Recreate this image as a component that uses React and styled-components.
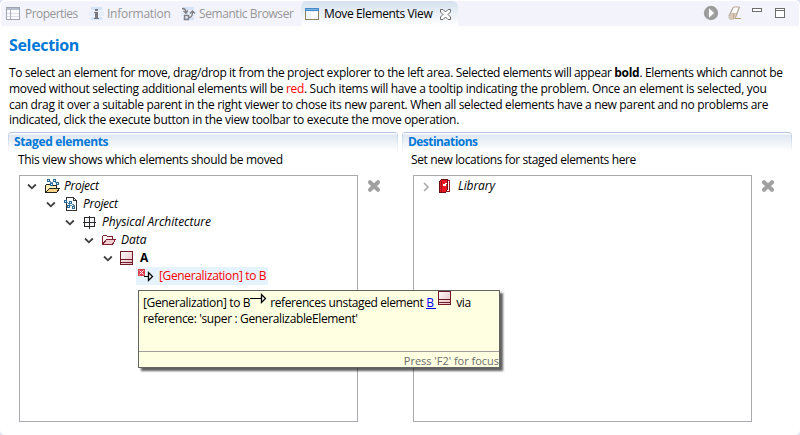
import React from 'react';
import styled, { createGlobalStyle } from 'styled-components';

const GlobalStyle = createGlobalStyle`
  * { box-sizing: border-box; }
  body {
    margin: 0;
    background: #dde5f5;
    overflow: hidden;
    font: 12px/16px "Open Sans", "Noto Sans", sans-serif;
    letter-spacing: -0.36px;
    color: #000;
    white-space: pre;
  }
`;

const View = styled.main`
  display: flex;
  flex-direction: column;
  width: 800px;
  height: 435px;
  padding: 1px 1px 0;
  background: #fff;
  border-radius: 5px;
`;

const Text = styled.span`
  letter-spacing: ${(p) => p.$ls ?? -0.36}px;
  font-weight: ${(p) => (p.$bold ? 700 : 400)};
  font-style: ${(p) => (p.$italic ? 'italic' : 'normal')};
  color: ${(p) => p.$color ?? 'inherit'};
`;

const TabBar = styled.header`
  display: flex;
  height: 25px;
  background: #f3f4fb;
  border-radius: 5px 5px 0 0;
`;

const Tab = styled.div`
  display: flex;
  align-items: center;
  width: ${(p) => p.$width}px;
  padding: 1px 0 0 ${(p) => p.$pad}px;
  gap: ${(p) => p.$gap ?? 4}px;
  color: ${(p) => (p.$active ? '#000' : '#969696')};
  background: ${(p) => (p.$active ? 'linear-gradient(#d5e1ed, #fff)' : 'none')};
  border-radius: ${(p) => (p.$active ? '6px 6px 0 0' : '0')};
  svg { flex: none; }
`;

const TabTitle = styled.span`
  margin-right: 4px;
`;

const TabTools = styled.div`
  display: flex;
  align-items: flex-start;
  margin-left: auto;
  width: 96px;
`;

const Tool = styled.div`
  display: flex;
  width: ${(p) => p.$width}px;
  padding-top: ${(p) => p.$top}px;
`;

const Heading = styled.h1`
  margin: 8px 0 0 8px;
  height: 23px;
  font-size: 16px;
  line-height: 22px;
  letter-spacing: -0.34px;
  color: #0078d7;
`;

const Intro = styled.div`
  display: flex;
  flex-direction: column;
  margin: 8px 0 0 8px;
  height: 67px;
  line-height: 15.8px;
`;

const Columns = styled.div`
  display: grid;
  grid-template-columns: 390px 390px;
  column-gap: 4px;
  margin-left: 7px;
`;

const Section = styled.section`
  display: flex;
  flex-direction: column;
`;

const SectionTitle = styled.h2`
  margin: 0;
  height: 20px;
  padding-left: 5px;
  font-size: 12px;
  line-height: 18px;
  letter-spacing: ${(p) => p.$ls}px;
  color: #0078d7;
  border: 1px solid transparent;
  border-top-color: #b4c7dd;
  border-radius: 4px 4px 0 0;
  background:
    linear-gradient(#b4c7dd, #fff) left / 1px 100% no-repeat border-box,
    linear-gradient(#b4c7dd, #fff) right / 1px 100% no-repeat border-box,
    linear-gradient(#fff 1px, #dfe7f1 2px, #fff) padding-box;
`;

const Caption = styled.p`
  margin: 0 0 7px;
  padding-left: ${(p) => p.$pad}px;
`;

const TreeRow = styled.div`
  display: flex;
  gap: 9px;
  margin-left: 11px;
`;

const RemoveButton = styled.span`
  display: flex;
  padding-top: 4px;
`;

const Tree = styled.div`
  width: 339px;
  height: 247px;
  padding-top: 1px;
  border: 1px solid #a9aaae;
`;

const Node = styled.div`
  display: flex;
  align-items: center;
  height: 18px;
  padding-left: ${(p) => p.$indent}px;
`;

const Twisty = styled.span`
  display: flex;
  width: 17px;
  padding-top: 1px;
`;

const NodeIcon = styled.span`
  display: flex;
  width: ${(p) => p.$width ?? 20}px;
`;

const Highlight = styled.div`
  display: flex;
  align-items: center;
  height: 18px;
  width: 132px;
  padding-left: 1px;
  background: #e5f3ff;
`;

const Tooltip = styled.aside`
  position: absolute;
  left: 138px;
  top: 290px;
  display: flex;
  flex-direction: column;
  width: 362px;
  height: 78px;
  background: #ffffe1;
  border: 1px solid #646464;
  box-shadow: 3px 3px 2px rgba(0, 0, 0, 0.62);
`;

const TipBody = styled.div`
  flex: 1;
  padding: 4px 0 0 4px;
`;

const TipLine = styled.div`
  display: flex;
  height: 16px;
`;

const TipIcon = styled.span`
  display: flex;
  flex: none;
  width: ${(p) => p.$width}px;
  margin-top: ${(p) => p.$lift}px;
`;

const TipLink = styled.a`
  width: 10px;
  height: 14px;
  margin-right: 2px;
  color: #0000ff;
  text-decoration: none;
  border-bottom: 1px solid #0000ff;
`;

const TipFooter = styled.div`
  height: 16px;
  border-top: 1px solid #a0a0a0;
  text-align: right;
  font-size: 11px;
  line-height: 18px;
  letter-spacing: -0.02px;
  color: #6d6d6d;
`;

const Icon = ({ w = 16, h = 16, smooth, children }) => (
  <svg width={w} height={h} viewBox={`0 0 ${w} ${h}`} fill="none" shapeRendering={smooth ? 'auto' : 'crispEdges'}>
    {children}
  </svg>
);

const PropertiesIcon = () => (
  <Icon>
    <path d="M1.500 1.500h13v12h-13z" fill="#fbfbfe" stroke="#9da5b1" />
    <path d="M2 2h12v2H2z" fill="#b4bdcb" />
    <path d="M2 7.500h12M2 10.500h12" stroke="#dcdfe7" />
    <path d="M5.500 4v9" stroke="#a9afbb" />
  </Icon>
);

const Glow = () => (
  <>
    <path d="M3 1h11v3H3zM3 11h11v3H3z" fill="#d5e3f7" />
    <path d="M1 5h15v5H1z" fill="#e6eefb" />
  </>
);

const InfoIcon = () => (
  <Icon>
    <Glow />
    <path d="M7 3h3v2H7zM6 6h4v6h1v1H6v-1h1V7H6z" fill="#77777d" />
  </Icon>
);

const SemanticIcon = () => (
  <Icon smooth>
    <Glow />
    <path d="M2 2.500c3 0 4 1 4 4M3.500 5L6 7.200 8 4.500M4.500 9.500h4v4h-4zM9 11.500c3 0 3.500-2 3.500-5.500M10 7.500L12.500 5 15 7.500" stroke="#7e7e84" strokeWidth="1.300" />
  </Icon>
);

const WindowIcon = () => (
  <Icon>
    <path d="M1 4h14v10H1z" fill="#edf5fc" />
    <path d="M7 6h7v4l-7 4z" fill="#fff" />
    <path d="M1 2h14v3H1z" fill="#4789c4" />
    <path d="M2 3h12v1H2z" fill="#79b2e0" />
    <path d="M1.500 5v8.500h13V5" stroke="#91805e" />
  </Icon>
);

const CloseIcon = () => (
  <Icon w={11} h={11} smooth>
    <path d="M.5.5H3L5.500 3 8 .5h2.500V3L8 5.500 10.500 8v2.500H8L5.500 8 3 10.500H.5V8L3 5.500.5 3z" fill="#fff" stroke="#6a6a6a" />
  </Icon>
);

const PlayIcon = () => (
  <Icon smooth>
    <circle cx="8" cy="8" r="7.200" fill="#a2a2a2" />
    <circle cx="8" cy="8" r="5.500" stroke="#949494" />
    <path d="M6 3.200v9.600L11 8z" fill="#fff" />
  </Icon>
);

const EraserIcon = () => (
  <Icon smooth>
    <path d="M6.500 2h6L8.500 12.500l-2 1.500H2.500L2 11z" fill="#fff" stroke="#baa998" />
    <path d="M4 7.500l4.500.5 2-1-3 6-1.500 1H2.500L2 11z" fill="#d8cabb" />
    <path d="M7 8l-1 6" stroke="#b9a48d" />
    <path d="M6 2.500L2 11M12 2.500L8.500 12.500" stroke="#a99c91" strokeWidth=".8" />
    <path d="M8 13.500h6" stroke="#b1a070" />
  </Icon>
);

const MinimizeIcon = () => (
  <Icon w={11} h={11}><path d="M.5.5h9v3h-9z" fill="#fff" stroke="#6d6d6d" /></Icon>
);

const MaximizeIcon = () => (
  <Icon w={11} h={11}><path d="M.5.5h9v9h-9zM1 2.500h8" fill="#fff" stroke="#6d6d6d" /></Icon>
);

const Chevron = ({ closed }) => (
  <Icon w={10} h={10} smooth>
    <path d={closed ? 'M3 1l4 4-4 4' : 'M1 2.500l3.900 3.800L8.800 2.500'} stroke={closed ? '#a6a6a6' : '#404040'} strokeWidth={closed ? 1.500 : 1.800} />
  </Icon>
);

const ProjectFolderIcon = () => (
  <Icon w={17}>
    <path d="M1.500 14.500v-7l1-1h4l1 1h5v2" fill="#fff0b7" stroke="#222" />
    <path d="M1.500 14.500l4-4h10l-3 4z" fill="#f7d287" stroke="#222" />
    <path d="M5 2.500l3 3 2-3 2 2" stroke="#5c91b5" />
    <g fill="#d3e9f6" stroke="#2d6d9d">
      <path d="M3.500 1.500h2v2h-2zM6.500 5.500h2v2h-2zM9.500 1.500h2v2h-2zM12.500 4.500h2v2h-2z" />
    </g>
  </Icon>
);

const ProjectFileIcon = () => (
  <Icon>
    <path d="M3.500 1.500h7l3 3v10h-10z" fill="#fff" stroke="#333" />
    <path d="M10.500 1.500v3h3" stroke="#333" />
    <path d="M4 6l4 4 2-2 2 3" stroke="#5c91b5" />
    <g fill="#d3e9f6" stroke="#2d6d9d">
      <path d="M1.500 4.500h2v2h-2zM6.500 5.500h2v2h-2zM4.500 9.500h2v2h-2zM9.500 10.500h2v2h-2z" />
    </g>
  </Icon>
);

const ArchitectureIcon = () => (
  <Icon>
    <path d="M2.500 3.500h10v9h-10z" fill="#f5f5f8" stroke="#292929" />
    <path d="M7.500 2v13M1 8.500h13" stroke="#292929" />
  </Icon>
);

const DataFolderIcon = () => (
  <Icon>
    <path d="M1.500 12.500v-8l1-1h3l1 1h5v3" fill="#fff4f4" stroke="#802131" />
    <path d="M1.500 12.500l4-5h9l-3 5z" fill="#efcdd1" stroke="#802131" />
  </Icon>
);

const ClassIcon = () => (
  <Icon w={14} h={15}>
    <defs>
      <linearGradient id="classFill" x1="0" y1="0" x2="1" y2="1">
        <stop stopColor="#fff" /><stop offset="1" stopColor="#e4b9bd" />
      </linearGradient>
    </defs>
    <path d="M.5.5h12v13H.5z" fill="url(#classFill)" stroke="#711b28" />
    <path d="M1 8.500h11M1 11.500h11" stroke="#711b28" />
  </Icon>
);

const ArrowIcon = ({ error }) => (
  <Icon w={17} h={16}>
    <path d={error ? 'M7 8.500h4' : 'M0 8.500h11'} stroke="#000" />
    <path d="M11.500 4.500v8l4-4z" fill="#fff" stroke="#000" strokeWidth="1.300" shapeRendering="auto" />
    {error && (
      <>
        <path d="M1 1h7v7H1z" fill="#d9414f" />
        <path d="M2.500 2.500l4 4M6.500 2.500l-4 4" stroke="#fff" shapeRendering="auto" />
      </>
    )}
  </Icon>
);

const LibraryIcon = () => (
  <Icon>
    <path d="M3.500 3.500l8-1v11l-8 1z" fill="#fff" stroke="#9c1620" />
    <path d="M1.500 3.500l2-2h6v10l-2 3h-6z" fill="#ed1822" stroke="#6c1019" />
    <path d="M3.500 3v11" stroke="#96121c" />
    <path d="M5 6h3v2H5zM7 5h2v1H7z" fill="#fff" />
  </Icon>
);

const RemoveIcon = () => (
  <Icon w={14} h={14} smooth>
    <path d="M3 3.200l8 7.600M11 3.200l-8 7.600" stroke="#a0a0a0" strokeWidth="4" strokeLinecap="round" />
  </Icon>
);

const TreeNode = ({ indent, icon, children, closed }) => (
  <Node $indent={indent}>
    <Twisty><Chevron closed={closed} /></Twisty>
    <NodeIcon>{icon}</NodeIcon>
    {children}
  </Node>
);

export default function App() {
  return (
    <>
      <GlobalStyle />
      <View>
        <TabBar>
          <Tab $width={83} $pad={4}><PropertiesIcon /><Text $ls={-0.55}>Properties</Text></Tab>
          <Tab $width={92} $pad={4} $gap={3}><InfoIcon /><Text $ls={-0.26}>Information</Text></Tab>
          <Tab $width={54 + 71} $pad={4} $gap={3}><SemanticIcon /><Text $ls={-0.42}>Semantic Browser</Text></Tab>
          <Tab $active $width={157} $pad={3}>
            <WindowIcon /><TabTitle>Move Elements View</TabTitle><CloseIcon />
          </Tab>
          <TabTools>
            <Tool $width={24} $top={4}><PlayIcon /></Tool>
            <Tool $width={25} $top={4}><EraserIcon /></Tool>
            <Tool $width={23} $top={7}><MinimizeIcon /></Tool>
            <Tool $width={20} $top={7}><MaximizeIcon /></Tool>
          </TabTools>
        </TabBar>
        <Heading>Selection</Heading>
        <Intro>
          <div><Text>{'To select an element for move, drag/drop it from the project explorer to the left area. Selected elements will appear '}</Text><Text $bold $ls={-0.3}>bold</Text><Text $ls={-0.37}>. Elements which cannot be</Text></div>
          <div><Text $ls={-0.295}>{'moved without selecting additional elements will be '}</Text><Text $color="#ff0000">red</Text><Text $ls={-0.28}>. Such items will have a tooltip indicating the problem. Once an element is selected, you</Text></div>
          <Text $ls={-0.336}>can drag it over a suitable parent in the right viewer to chose its new parent. When all selected elements have a new parent and no problems are</Text>
          <Text $ls={-0.306}>indicated, click the execute button in the view toolbar to execute the move operation.</Text>
        </Intro>
        <Columns>
          <Section>
            <SectionTitle $ls={-0.35}>Staged elements</SectionTitle>
            <Caption $pad={10}><Text $ls={-0.33}>This view shows which elements should be moved</Text></Caption>
            <TreeRow>
              <Tree>
                <TreeNode indent={7} icon={<ProjectFolderIcon />}><Text $italic $ls={-0.3}>Project</Text></TreeNode>
                <TreeNode indent={26} icon={<ProjectFileIcon />}><Text $italic $ls={-0.3}>Project</Text></TreeNode>
                <TreeNode indent={45} icon={<ArchitectureIcon />}><Text $italic $ls={-0.03}>Physical Architecture</Text></TreeNode>
                <TreeNode indent={64} icon={<DataFolderIcon />}><Text $italic $ls={0}>Data</Text></TreeNode>
                <TreeNode indent={83} icon={<ClassIcon />}><Text $bold>A</Text></TreeNode>
                <Node $indent={116}>
                  <Highlight>
                    <NodeIcon $width={22}><ArrowIcon error /></NodeIcon>
                    <Text $color="#ff0000">[Generalization] to B</Text>
                  </Highlight>
                </Node>
              </Tree>
              <RemoveButton><RemoveIcon /></RemoveButton>
            </TreeRow>
          </Section>
          <Section>
            <SectionTitle $ls={-0.56}>Destinations</SectionTitle>
            <Caption $pad={9}><Text $ls={-0.38}>Set new locations for staged elements here</Text></Caption>
            <TreeRow>
              <Tree>
                <TreeNode indent={7} closed icon={<LibraryIcon />}><Text $italic $ls={-0.1}>Library</Text></TreeNode>
              </Tree>
              <RemoveButton><RemoveIcon /></RemoveButton>
            </TreeRow>
          </Section>
        </Columns>
      </View>
      <Tooltip>
        <TipBody>
          <TipLine>
            <Text>[Generalization] to B</Text>
            <TipIcon $width={20} $lift={-5}><ArrowIcon /></TipIcon>
            <Text $ls={-0.39}>{'references unstaged element '}</Text>
            <TipLink>B</TipLink>
            <TipIcon $width={18} $lift={-4}><ClassIcon /></TipIcon>
            <Text>via</Text>
          </TipLine>
          <TipLine>
            <Text>reference: 'super : GeneralizableElement'</Text>
          </TipLine>
        </TipBody>
        <TipFooter>Press 'F2' for focus</TipFooter>
      </Tooltip>
    </>
  );
}
